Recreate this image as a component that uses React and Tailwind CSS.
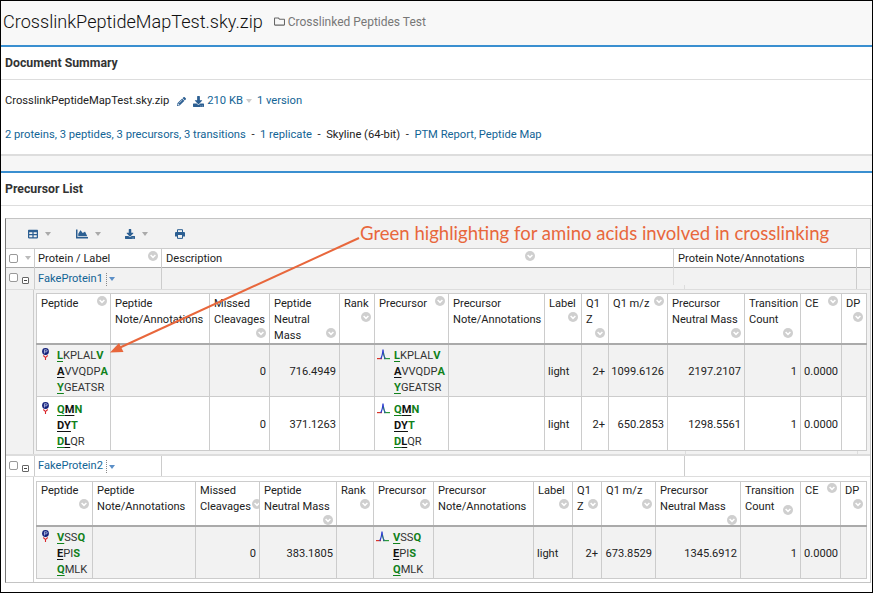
import React from 'react';
import { FaTable, FaChartArea, FaDownload, FaPencilAlt, FaRegFolder } from 'react-icons/fa';

const G1 = 'grid grid-cols-[74px_99px_60px_70px_35px_74px_96px_37px_27px_59px_77px_56px_41px_26px]';
const G2 = 'grid grid-cols-[56px_103px_64px_77px_37px_60px_100px_39px_29px_54px_85px_60px_40px_27px]';
const OUTER = 'grid grid-cols-[28px_127px_512px_183px_14px]';

function SortIcon({ className = '' }) {
  return (
    <svg viewBox="0 0 10 10" className={'w-[10px] h-[10px] shrink-0 ' + className}>
      <circle cx="5" cy="5" r="5" fill="#cfcfcf" />
      <path d="M2.6 4 L5 6.4 L7.4 4" fill="none" stroke="#fff" strokeWidth="1.5" />
    </svg>
  );
}

function Caret({ color = '#bbb', className = '' }) {
  return <span className={'inline-block w-0 h-0 border-l-[3.5px] border-r-[3.5px] border-t-[4px] border-l-transparent border-r-transparent ' + className} style={{ borderTopColor: color }} />;
}

function Check() {
  return <span className="block w-[9px] h-[9px] border border-[#999] rounded-[2px] bg-white" />;
}

function Minus() {
  return (
    <span className="flex items-center justify-center w-[7px] h-[7px] border border-[#666] rounded-[1px] bg-white">
      <span className="block w-[3px] h-px bg-[#444]" />
    </span>
  );
}

function Pin() {
  return (
    <svg viewBox="0 0 9 12" className="w-[9px] h-[12px] shrink-0 block">
      <path d="M2.3 7.5 L4.5 9.6 L6.7 7.5 M4.5 9.6 V12" fill="none" stroke="#d9252a" strokeWidth="1.1" />
      <circle cx="4.5" cy="3.5" r="3.4" fill="#14207a" />
      <path d="M3.4 5.5 V1.8 H5.2 a1 1 0 0 1 0 2.1 H3.4" fill="none" stroke="#dfe6ff" strokeWidth="0.7" />
    </svg>
  );
}

function Peak() {
  return (
    <svg viewBox="0 0 13 11" className="w-[13px] h-[11px] shrink-0 block">
      <path d="M0 9.6 H5" fill="none" stroke="#d9352a" strokeWidth="1.2" />
      <path d="M7 9.6 H13" fill="none" stroke="#2b9a3a" strokeWidth="1.2" />
      <path d="M3.6 9.8 C5 8 5.7 4 6 0.5 C6.3 4 7 8 8.4 9.8" fill="none" stroke="#2a3ccf" strokeWidth="1.2" />
      <path d="M6.6 4 C6.9 6.5 7.4 8.5 8.6 9.6" fill="none" stroke="#2b9a3a" strokeWidth="0.7" />
    </svg>
  );
}

function PrintIcon() {
  return (
    <svg viewBox="0 0 10 10" className="w-[10px] h-[10px] block">
      <path d="M2.5 3.5 V0.7 H7.5 V3.5" fill="none" stroke="currentColor" strokeWidth="1" />
      <path d="M0 4 a1 1 0 0 1 1 -1 H9 a1 1 0 0 1 1 1 V7.5 H8 V6 H2 V7.5 H0 Z" fill="currentColor" />
      <path d="M2.5 6 V9.4 H7.5 V6" fill="none" stroke="currentColor" strokeWidth="1" />
    </svg>
  );
}

function Seq({ parts }) {
  return (
    <div className="h-4 leading-4 whitespace-nowrap">
      {parts.map(([t, k], i) => (
        <span
          key={i}
          className={
            k === 'gu' ? 'font-bold text-[#10811a] underline decoration-[#10811a] underline-offset-2'
            : k === 'ku' ? 'font-bold text-[#111] underline decoration-[#111] underline-offset-2'
            : k === 'g' ? 'font-bold text-[#10811a]'
            : 'text-[#333]'
          }
        >{t}</span>
      ))}
    </div>
  );
}

const LK = [
  [['L', 'gu'], ['KPLAL', ''], ['V', 'g']],
  [['A', 'ku'], ['VVQDP', ''], ['A', 'g']],
  [['Y', 'gu'], ['GEATSR', '']],
];
const QM = [
  [['Q', 'gu'], ['M', 'ku'], ['N', 'g']],
  [['D', 'ku'], ['Y', 'ku'], ['T', 'g']],
  [['D', 'gu'], ['L', 'ku'], ['QR', '']],
];
const VS = [
  [['V', 'gu'], ['SS', ''], ['Q', 'g']],
  [['E', 'ku'], ['PI', ''], ['S', 'g']],
  [['Q', 'gu'], ['MLK', '']],
];

function HeadCell({ lines, icon, last, cls = '', iconCls = '' }) {
  const count = Math.max(lines.length, icon === undefined ? 0 : icon + 1);
  return (
    <div className={'border-l border-[#ccc] pl-1 pr-[3px] overflow-hidden ' + (last ? 'border-r ' : '') + cls}>
      {Array.from({ length: count }).map((_, i) => (
        <div key={i} className="h-4 leading-4 flex justify-between items-start whitespace-nowrap">
          <span>{lines[i] || ''}</span>
          {icon === i && <SortIcon className={iconCls} />}
        </div>
      ))}
    </div>
  );
}

function HeadRow({ grid, h, pt, cols }) {
  return (
    <div className={grid + ' ' + h + ' border-t border-b-2 border-t-[#ccc] border-b-[#aaa] bg-white'}>
      {cols.map((c, i) => <HeadCell key={i} {...c} cls={pt} last={i === cols.length - 1} />)}
    </div>
  );
}

function Num({ v }) {
  return <div className="border-l border-[#ccc] pr-[3px] pt-[3px] flex items-center justify-end">{v}</div>;
}
function Lft({ v, last }) {
  return <div className={'border-l border-[#ccc] pl-[3px] pt-[3px] flex items-center ' + (last ? 'border-r' : '')}>{v}</div>;
}
function SeqCell({ icon, seq, pt, kind }) {
  return (
    <div className={'border-l border-[#ccc] flex ' + pt + (kind === 'pep' ? ' pl-1' : ' pl-[2px]')}>
      <div className={kind === 'pep' ? 'w-[16px]' : 'w-[17px] pt-[1px]'}>{icon}</div>
      <div>{seq.map((p, i) => <Seq key={i} parts={p} />)}</div>
    </div>
  );
}

function DataRow({ grid, h, bg, pt, seq, vals }) {
  return (
    <div className={grid + ' ' + h + ' ' + bg + ' border-b border-[#ccc]'}>
      <SeqCell kind="pep" icon={<Pin />} seq={seq} pt={pt} />
      <Lft v="" />
      <Num v={vals[0]} />
      <Num v={vals[1]} />
      <Lft v="" />
      <SeqCell kind="pre" icon={<Peak />} seq={seq} pt={pt} />
      <Lft v="" />
      <Lft v="light" />
      <Num v="2+" />
      <Num v={vals[2]} />
      <Num v={vals[3]} />
      <Num v="1" />
      <Lft v="0.0000" />
      <Lft v="" last />
    </div>
  );
}

const H1 = [
  { lines: ['Peptide'], icon: 0 },
  { lines: ['Peptide', 'Note/Annotations'] },
  { lines: ['Missed', 'Cleavages'], icon: 2 },
  { lines: ['Peptide', 'Neutral', 'Mass'], icon: 2 },
  { lines: ['Rank'], icon: 1 },
  { lines: ['Precursor'], icon: 0 },
  { lines: ['Precursor', 'Note/Annotations'] },
  { lines: ['Label'], icon: 1 },
  { lines: ['Q1', 'Z'], icon: 2 },
  { lines: ['Q1 m/z'], icon: 0 },
  { lines: ['Precursor', 'Neutral Mass'], icon: 2 },
  { lines: ['Transition', 'Count'], icon: 2, iconCls: 'mr-[4px]' },
  { lines: ['CE'], icon: 0 },
  { lines: ['DP'], icon: 1 },
];
const H2 = [
  { lines: ['Peptide'], icon: 1 },
  { lines: ['Peptide', 'Note/Annotations'] },
  { lines: ['Missed', 'Cleavages'], icon: 1, iconCls: '-mr-[6px]' },
  { lines: ['Peptide', 'Neutral Mass'], icon: 2 },
  { lines: ['Rank'], icon: 1 },
  { lines: ['Precursor'], icon: 1 },
  { lines: ['Precursor', 'Note/Annotations'] },
  { lines: ['Label'], icon: 1 },
  { lines: ['Q1', 'Z'], icon: 1 },
  { lines: ['Q1 m/z'], icon: 1 },
  { lines: ['Precursor', 'Neutral Mass'], icon: 2 },
  { lines: ['Transition', 'Count'], icon: 1, iconCls: 'mr-[4px] mt-[6px]' },
  { lines: ['CE'], icon: 0 },
  { lines: ['DP'], icon: 1 },
];

function ProteinCell({ name }) {
  return (
    <div className="border-l border-[#ccc] pl-[3px] pt-[1px] flex items-center text-[#126495]">
      <span>{name}</span>
      <span className="ml-[3px] h-[13px] border-l border-dotted border-[#888]" />
      <Caret color="#5b8fc7" className="ml-[2px]" />
    </div>
  );
}

function SelectCell() {
  return (
    <div className="pl-[3px] pt-[5px] flex items-start gap-[4px]">
      <Check />
      <span className="block mt-[4px]"><Minus /></span>
    </div>
  );
}

function ToolButton({ icon, caret = true, cls }) {
  return (
    <div className={'flex items-center gap-[7px] text-[#2c5f92] ' + cls}>
      {icon}
      {caret && <Caret color="#aaa" />}
    </div>
  );
}

export default function App() {
  return (
    <div className="relative w-[873px] h-[593px] border border-black bg-white overflow-hidden text-[11.1px] text-[#222] font-['Roboto',sans-serif]">
      <div className="h-[44px] bg-[#f8f8f8] flex items-center pl-[2px] pb-[3px]">
        <span className="text-[18.1px] font-light text-[#111]">CrosslinkPeptideMapTest.sky.zip</span>
        <FaRegFolder className="ml-[11px] text-[11px] text-[#666]" />
        <span className="ml-[3px] text-[12px] text-[#777]">Crosslinked Peptides Test</span>
      </div>
      <div className="h-[2px] bg-[#3a8fd0]" />

      <div className="h-[33px] border-b border-[#ddd] pl-1 flex items-center text-[12.3px] font-bold text-[#333]">Document Summary</div>
      <div className="h-[76px] border-b-2 border-[#ddd] pl-1 pt-[12px] text-[11.2px]">
        <div className="h-[18px] flex items-center">
          <span>CrosslinkPeptideMapTest.sky.zip</span>
          <FaPencilAlt className="ml-[8px] text-[9px] text-[#2c5f92]" />
          <FaDownload className="ml-[7px] text-[11px] text-[#2c5f92]" />
          <span className="ml-[3px] text-[#126495]">210 KB</span>
          <Caret className="ml-[3px]" color="#ccc" />
          <span className="ml-[5px] text-[#126495]">1 version</span>
        </div>
        <div className="mt-4 h-[18px] flex items-center whitespace-pre">
          <span className="text-[#126495]">2 proteins, 3 peptides, 3 precursors, 3 transitions</span>
          <span>{'  -  '}</span>
          <span className="text-[#126495]">1 replicate</span>
          <span>{'  -  '}</span>
          <span>Skyline (64-bit)</span>
          <span>{'  -  '}</span>
          <span className="text-[#126495]">PTM Report, Peptide Map</span>
        </div>
      </div>
      <div className="h-[15px] bg-[#f6f6f6]" />
      <div className="h-[2px] bg-[#3a8fd0]" />
      <div className="h-[33px] border-b border-[#ddd] pl-1 flex items-center text-[12.3px] font-bold text-[#333]">Precursor List</div>

      <div className="ml-[4px] mt-[12px] w-[866px] border border-[#c4c4c4] border-l-[#777]">
        <div className="h-[30px] bg-[#f2f2f2] border-b border-[#ccc] flex items-center">
          <ToolButton cls="ml-[22px]" icon={<FaTable className="text-[10px]" />} />
          <ToolButton cls="ml-[25px]" icon={<FaChartArea className="text-[12px]" />} />
          <ToolButton cls="ml-[24px]" icon={<FaDownload className="text-[10px]" />} />
          <ToolButton cls="ml-[27px]" caret={false} icon={<PrintIcon />} />
        </div>
        <div className={OUTER + ' h-[19px] border-b border-[#aaa]'}>
          <div className="pl-[3px] flex items-center gap-[7px]"><Check /><Caret /></div>
          <div className="border-l border-[#ccc] pl-[3px] pt-[2px] flex items-center justify-between pr-[3px]">
            <span>Protein / Label</span><SortIcon className="-mt-[6px]" />
          </div>
          <div className="border-l border-[#ccc] pl-1 pt-[2px] flex items-center justify-end pr-[138px]">
            <span className="mr-auto">Description</span><SortIcon className="-mt-[6px]" />
          </div>
          <div className="border-l border-[#ccc] pl-1 pt-[2px] flex items-center">Protein Note/Annotations</div>
          <div className="border-l border-[#ccc]" />
        </div>

        <div className={OUTER + ' h-[22px] bg-[#f2f2f2] border-b border-[#ddd]'}>
          <SelectCell />
          <ProteinCell name="FakeProtein1" />
          <div className="border-l border-[#ccc]" />
          <div className="h-[17px] border-l border-[#ddd]">
            <div className="ml-[10px] mt-[17px] h-[5px] border-l border-[#ddd]" />
          </div>
          <div className="border-l border-[#ccc]" />
        </div>
        <div className="relative flex bg-[#f2f2f2] border-b-2 border-[#ddd]">
          <div className="w-[28px] border-r border-[#ccc] shrink-0" />
          <div className="pl-[2px] pt-[3px] pb-[3px]">
            <HeadRow grid={G1} h="h-[52px]" pt="pt-[2px]" cols={H1} />
            <DataRow grid={G1} h="h-[52px]" bg="bg-[#f2f2f2]" pt="pt-[3px]" seq={LK} vals={['0', '716.4949', '1099.6126', '2197.2107']} />
            <DataRow grid={G1} h="h-[54px]" bg="bg-white" pt="pt-[5px]" seq={QM} vals={['0', '371.1263', '650.2853', '1298.5561']} />
          </div>
          <span className="absolute left-[679px] bottom-0 h-[3px] border-l border-[#ddd]" />
          <span className="absolute left-[851px] bottom-0 h-[3px] border-l border-[#ddd]" />
        </div>

        <div className={OUTER + ' h-[21px] bg-white border-b border-[#ddd]'}>
          <SelectCell />
          <ProteinCell name="FakeProtein2" />
          <div className="grid grid-cols-[523px_172px] col-span-3">
            <div className="border-l border-[#ccc]" />
            <div className="border-l border-[#ccc]" />
          </div>
        </div>
        <div className="flex bg-white">
          <div className="w-[28px] border-r border-[#ccc] shrink-0" />
          <div className="pl-[2px] pt-[4px] pb-[3px]">
            <HeadRow grid={G2} h="h-[46px]" pt="pt-[1px]" cols={H2} />
            <DataRow grid={G2} h="h-[52px]" bg="bg-[#f2f2f2]" pt="pt-[3px]" seq={VS} vals={['0', '383.1805', '673.8529', '1345.6912']} />
          </div>
        </div>
      </div>

      <div className="absolute left-[359px] top-[220px] text-[18.55px] leading-6 text-[#e8673c] font-['Lato',sans-serif] whitespace-nowrap">Green highlighting for amino acids involved in crosslinking</div>
      <svg className="absolute left-0 top-0 w-[873px] h-[593px] pointer-events-none" viewBox="0 0 873 593">
        <path d="M358 237 L118 347" stroke="#e8673c" strokeWidth="2" fill="none" />
        <path d="M109 351.5 L118 342 L122.5 351 Z" fill="#e8673c" />
      </svg>
    </div>
  );
}
